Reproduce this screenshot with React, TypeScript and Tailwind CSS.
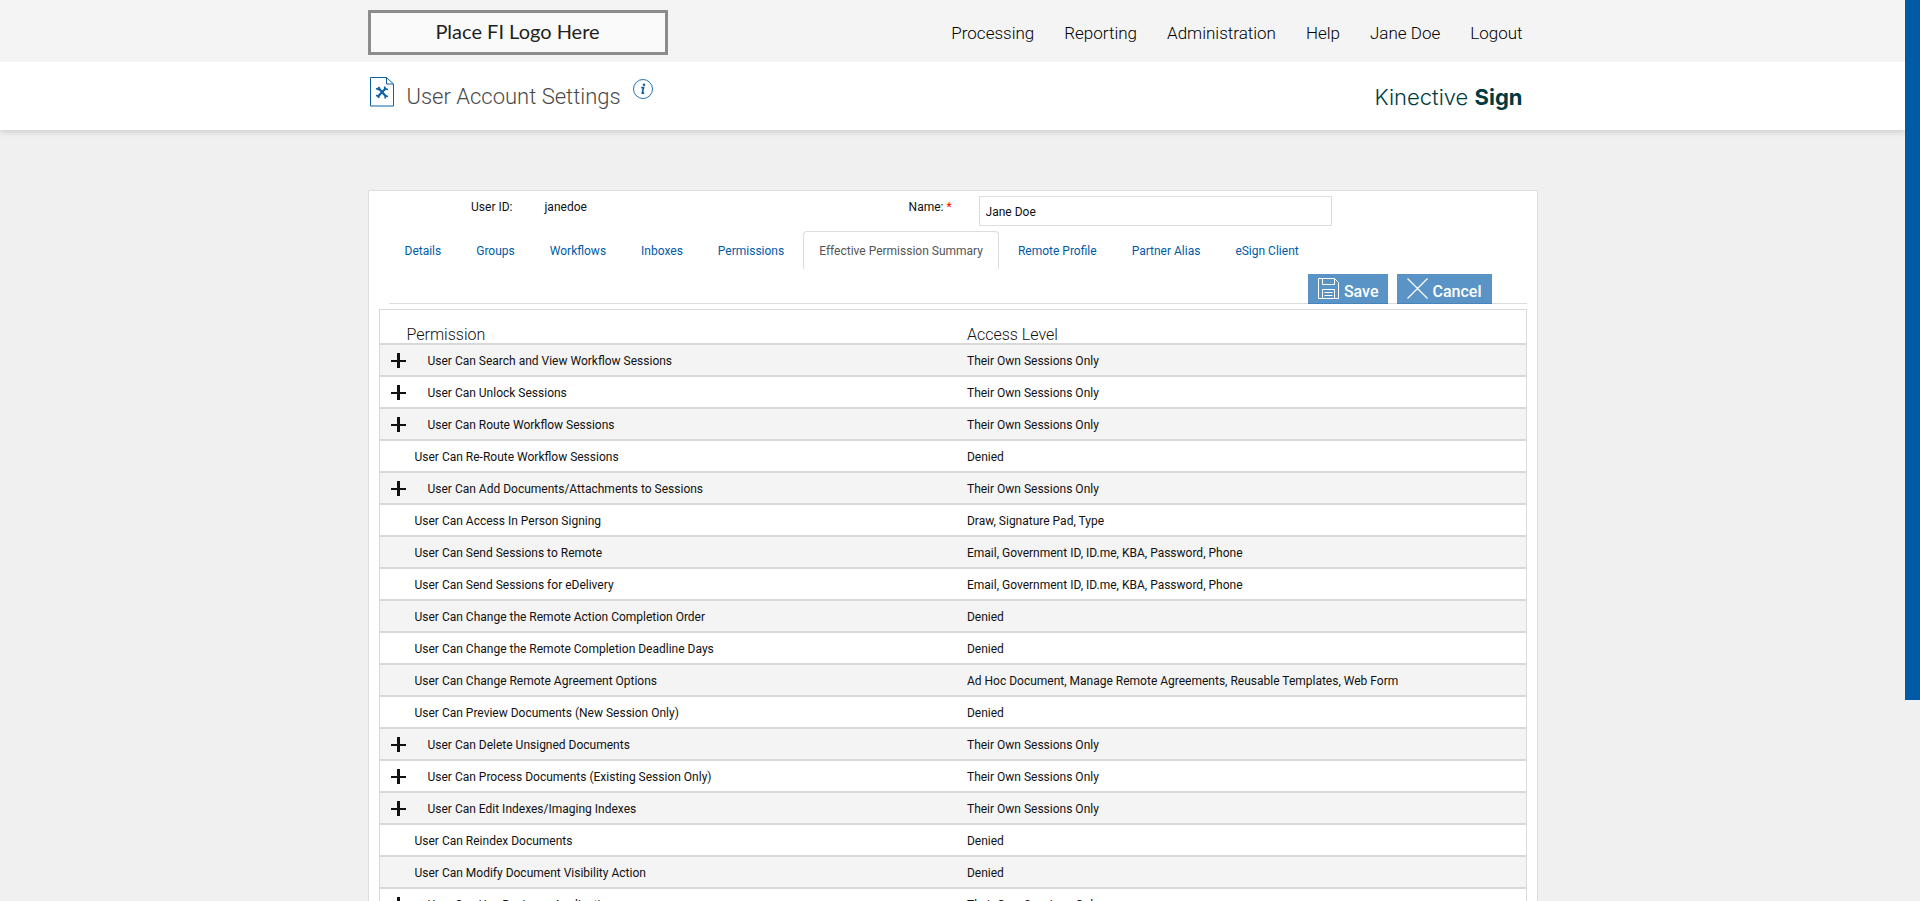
import React from 'react'

const navLinks = ['Processing', 'Reporting', 'Administration', 'Help', 'Jane Doe', 'Logout']

const tabs = [
  'Details',
  'Groups',
  'Workflows',
  'Inboxes',
  'Permissions',
  'Effective Permission Summary',
  'Remote Profile',
  'Partner Alias',
  'eSign Client',
]

const OWN = 'Their Own Sessions Only'
const REMOTE = 'Email, Government ID, ID.me, KBA, Password, Phone'

const permissions = [
  { name: 'User Can Search and View Workflow Sessions', access: OWN, expandable: true },
  { name: 'User Can Unlock Sessions', access: OWN, expandable: true },
  { name: 'User Can Route Workflow Sessions', access: OWN, expandable: true },
  { name: 'User Can Re-Route Workflow Sessions', access: 'Denied' },
  { name: 'User Can Add Documents/Attachments to Sessions', access: OWN, expandable: true },
  { name: 'User Can Access In Person Signing', access: 'Draw, Signature Pad, Type' },
  { name: 'User Can Send Sessions to Remote', access: REMOTE },
  { name: 'User Can Send Sessions for eDelivery', access: REMOTE },
  { name: 'User Can Change the Remote Action Completion Order', access: 'Denied' },
  { name: 'User Can Change the Remote Completion Deadline Days', access: 'Denied' },
  {
    name: 'User Can Change Remote Agreement Options',
    access: 'Ad Hoc Document, Manage Remote Agreements, Reusable Templates, Web Form',
  },
  { name: 'User Can Preview Documents (New Session Only)', access: 'Denied' },
  { name: 'User Can Delete Unsigned Documents', access: OWN, expandable: true },
  { name: 'User Can Process Documents (Existing Session Only)', access: OWN, expandable: true },
  { name: 'User Can Edit Indexes/Imaging Indexes', access: OWN, expandable: true },
  { name: 'User Can Reindex Documents', access: 'Denied' },
  { name: 'User Can Modify Document Visibility Action', access: 'Denied' },
  { name: 'User Can Use Business Applications', access: OWN, expandable: true },
]

const SettingsIcon = () => (
  <svg width="24" height="30" viewBox="0 0 24 30" fill="none" stroke="#0b62a8">
    <path d="M.5.5h16l7 6.500v22H.5z" />
    <path d="M16.500.5v6.500h7" />
    <path d="M8 10.500l8 9M16 11l-8.500 9" strokeWidth="2.200" />
    <path d="M6 11.500l2.500 1 1-2.500M18 19.500l-2.500-.5-.5 2.500M14.500 9.500l.5 2.500 3 .5M6 18.500l2.500.5.5 2" strokeWidth="1.600" />
  </svg>
)

const InfoIcon = () => (
  <svg width="20" height="20" viewBox="0 0 20 20" fill="none" stroke="#0b62a8">
    <circle cx="10" cy="10" r="9.500" strokeWidth=".9" />
    <circle cx="11" cy="5.800" r="1.300" fill="#0b62a8" stroke="none" />
    <path d="M8.200 8.600h2.300l-1.200 5.600h1.900" strokeWidth="1.700" />
  </svg>
)

const SaveIcon = () => (
  <svg width="21" height="21" viewBox="0 0 21 21" fill="none" stroke="white">
    <path d="M.5.5h16l4 4v16H.5z" />
    <path d="M4.500.5v6h12v-6M4.500 20.500v-9h12v9M6.500 14.500h8M6.500 17.500h8" />
  </svg>
)

const CancelIcon = () => (
  <svg width="21" height="21" viewBox="0 0 21 21" fill="none" stroke="white" strokeWidth="1.200">
    <path d="M.5.5l20 20M20.500.5l-20 20" />
  </svg>
)

const Header = () => {
  return (
    <header className="shadow-[0_2px_6px_rgba(0,0,0,0.15)]">
      <div className="bg-[#f4f4f4]">
        <div className="mx-auto flex h-[62px] max-w-[1170px] items-center justify-between pt-1">
          <div className="mb-[2px] flex h-[45px] w-[300px] items-center justify-center border-3 border-[#8c8c8c] bg-[#fafafa] pb-[2px] font-['Lato'] text-xl text-[#231f20]">
            Place FI Logo Here
          </div>
          <nav className="flex gap-[30px] pr-[15px] pt-[2px] text-[17px] font-light text-black">
            {navLinks.map((link) => (
              <a key={link} href="#">{link}</a>
            ))}
          </nav>
        </div>
      </div>
      <div className="bg-white">
        <div className="mx-auto flex h-[68px] max-w-[1170px] items-center justify-between pr-[15px] pt-[2px]">
          <div className="flex items-center pl-[2px]">
            <div className="mb-[10px]"><SettingsIcon /></div>
            <h1 className="mb-[2px] ml-[13px] text-[22px] font-light text-[#4a4a4a]">User Account Settings</h1>
            <button aria-label="Information" className="mb-4 ml-3"><InfoIcon /></button>
          </div>
          <div className="font-['Inter'] text-[22px] font-light text-[#003b40]">
            Kinective <span className="font-bold">Sign</span>
          </div>
        </div>
      </div>
    </header>
  )
}

const App = () => {
  return (
    <div className="flex h-screen bg-[#f0f0f0] font-['Roboto',sans-serif] text-[12px] text-[#111]">
      <div className="min-w-0 flex-1 overflow-hidden">
        <Header />

        <main className="mx-auto mt-[60px] max-w-[1170px] border border-[#ddd] bg-white px-[10px]">
          <div className="flex pt-[5px]">
            <div className="flex w-[46%] leading-[22px]">
              <span className="w-[134px] text-right">User ID:</span>
              <span className="pl-8">janedoe</span>
            </div>
            <label htmlFor="name" className="w-[72px] pl-[2px] leading-[22px]">
              Name: <span className="text-[#f00]">*</span>
            </label>
            <input
              id="name"
              defaultValue="Jane Doe"
              className="h-[30px] w-[353px] border border-[#ddd] px-[6px] pt-[2px]"
            />
          </div>

          <div role="tablist" className="ml-[10px] mt-[5px] flex gap-[3px]">
            {tabs.map((tab) => (
              <button
                key={tab}
                role="tab"
                aria-selected={tab === 'Effective Permission Summary'}
                className="h-[38px] rounded-t border border-b-0 border-transparent px-[15px] text-[#005ba6] aria-selected:border-[#ddd] aria-selected:text-[#555]"
              >
                {tab}
              </button>
            ))}
          </div>

          <div className="ml-[10px] mt-[5px] flex justify-end gap-[9px] border-b border-[#ddd] pr-[35px] text-base font-medium text-white">
            <button className="-mb-px flex h-[30px] items-center gap-[5px] border-b border-[#4785bb] bg-[#5a94c6] pl-[10px] pr-[9px]">
              <SaveIcon />
              <span className="pt-[6px]">Save</span>
            </button>
            <button className="-mb-px flex h-[30px] items-center gap-[5px] border-b border-[#4785bb] bg-[#5a94c6] px-[10px]">
              <CancelIcon />
              <span className="pt-[6px]">Cancel</span>
            </button>
          </div>

          <table className="mt-[5px] w-full table-fixed border border-b-0 border-[#d9d9d9] text-left">
            <thead>
              <tr className="h-[34px] border-b-2 border-[#d9d9d9] align-bottom text-base leading-4">
                <th className="w-[51%] pl-[27px] font-light">Permission</th>
                <th className="pl-[3px] font-light">Access Level</th>
              </tr>
            </thead>
            <tbody>
              {permissions.map((row) => (
                <tr key={row.name} className="h-8 border-b-2 border-[#d9d9d9] odd:bg-[#f4f4f4]">
                  <td className="pt-[2px]">
                    {row.expandable ? (
                      <div className="flex items-center gap-[22px] pl-[11px]">
                        <button aria-label="Expand">
                          <svg width="15" height="15" viewBox="0 0 15 15" stroke="#111" strokeWidth="2">
                            <path d="M0 8h15" />
                            <path d="M7.500 0v15" strokeWidth="3" />
                          </svg>
                        </button>
                        {row.name}
                      </div>
                    ) : (
                      <div className="pl-[35px]">{row.name}</div>
                    )}
                  </td>
                  <td className="pl-[3px] pt-[2px]">{row.access}</td>
                </tr>
              ))}
            </tbody>
          </table>
        </main>
      </div>

      {/* page scrollbar */}
      <div className="w-[15px]">
        <div className="h-[700px] bg-[#005ba6]"></div>
      </div>
    </div>
  )
}

export default App
